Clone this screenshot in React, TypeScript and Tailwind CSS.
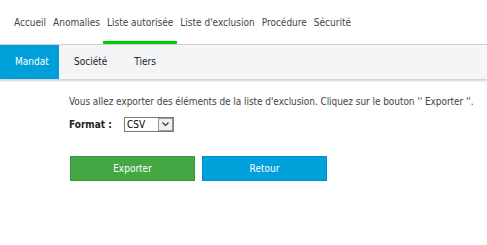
import { useState } from 'react'

const MENU = ['Accueil', 'Anomalies', 'Liste autorisée', "Liste d'exclusion", 'Procédure', 'Sécurité']
const TABS = ['Mandat', 'Société', 'Tiers']

export default function App() {
  const [format] = useState('CSV')

  return (
    <div
      className="w-[487px] h-[245px] bg-white text-[10px] leading-[14px] text-[#333]"
      style={{ fontFamily: '"DejaVu Sans Condensed", "DejaVu Sans", sans-serif' }}
    >
      {/* Main menu */}
      <div className="flex h-[45px] items-end pl-[10.5px] border-b border-[#d0d0d0]">
        {MENU.map((m) => (
          <div
            key={m}
            className={
              m === 'Liste autorisée'
                ? 'px-[3.5px] pb-[11px] border-b-[3px] border-[#00d000] text-[#444]'
                : 'px-[3.5px] pb-[14px] text-[#444]'
            }
          >
            {m}
          </div>
        ))}
      </div>

      {/* Sub tabs */}
      <div className="flex h-[34px] bg-[#f4f5f7] shadow-[0_2px_2px_rgba(0,0,0,0.18)]">
        {TABS.map((t, i) => (
          <div
            key={t}
            className={
              i === 0
                ? 'flex items-center w-[59px] pl-[15px] bg-[#009fd9] text-white'
                : 'flex items-center pl-[15px] pr-[12px] text-[#222]'
            }
          >
            {t}
          </div>
        ))}
      </div>

      {/* Content */}
      <div className="pl-[69px] pt-[16px]">
        <p className="text-[#444] tracking-[-0.06px]">
          Vous allez exporter des éléments de la liste d'exclusion. Cliquez sur le bouton '' Exporter ''.
        </p>
        <div className="flex items-center mt-[8px]">
          <span className="w-[55px] font-bold text-[#222]">Format :</span>
          <div className="flex w-[50px] h-[15px] border border-[#7a7a7a] bg-white">
            <span className="flex-1 pl-[2px] leading-[13px] text-black">{format}</span>
            <span className="flex items-center justify-center w-[15px] h-[13px] border border-[#9a9a9a] bg-[#f0f0f0]">
              <svg width="7" height="5" viewBox="0 0 7 5">
                <path d="M0.5 0.5 L3.5 3.5 L6.5 0.5" fill="none" stroke="#333" strokeWidth="1.2" />
              </svg>
            </span>
          </div>
        </div>
        <div className="flex gap-[7px] mt-[24px] pl-[1px]">
          <button className="w-[125px] h-[25px] bg-[#43a843] border border-[#3a963a] text-white">Exporter</button>
          <button className="w-[125px] h-[25px] bg-[#00a0da] border border-[#0090c8] text-white">Retour</button>
        </div>
      </div>
    </div>
  )
}
